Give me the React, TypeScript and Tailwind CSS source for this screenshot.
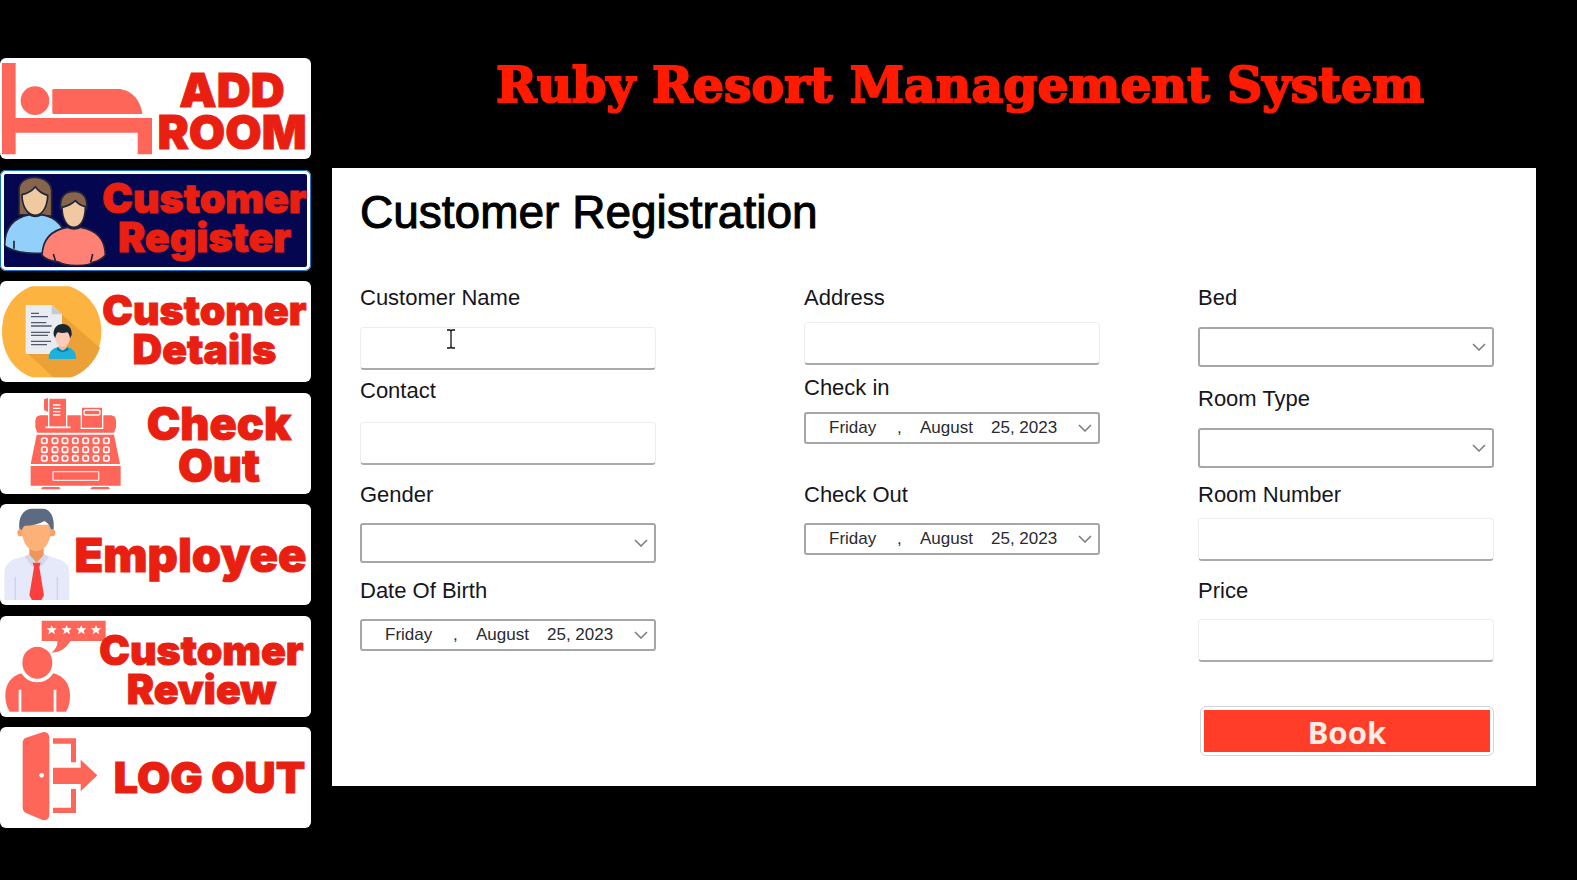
import type { ReactNode } from "react";

const CORAL = "#ff665a";

function BedIcon() {
  return (
    <svg aria-hidden="true" viewBox="0 22 459 303" className="h-[101px] w-[153px] shrink-0 overflow-visible" fill={CORAL}>
      <path d="M6 37h41v165h409v109h-43v-65H47v65H6z" />
      <circle cx="105" cy="150" r="43" />
      <path d="M161 115h200c38 6 62 38 66 75H161q-4 0-4-4v-67q0-4 4-4z" />
    </svg>
  );
}

function CoupleIcon() {
  return (
    <svg aria-hidden="true" viewBox="0 354 294 303" className="h-[101px] w-[98px] shrink-0 overflow-visible" stroke="#20253a" strokeWidth="5" strokeLinejoin="round">
      <path d="M57 488V412c0-22 20-36 47-36s50 16 51 40v76z" fill="#86654c" />
      <path d="M88 462h36v26q-18 10-36 0z" fill="#e6b98f" stroke="none" />
      <path d="M66 428q26-6 40-24 12 18 37 26c0 34-16 60-38 60s-39-26-39-62z" fill="#f0c9a0" />
      <path d="M14 580c0-50 24-82 74-92q18 10 36 0c50 8 74 42 76 92-20 18-60 24-96 24s-62-6-84-18z" fill="#93cffb" />
      <path d="M42 566v24" fill="none" />
      <path d="M182 470c-4-34 12-52 40-52s42 20 38 54z" fill="#86654c" />
      <path d="M186 466q26-6 40-20 12 14 30 18c0 36-12 62-34 62s-36-26-36-60z" fill="#f0c9a0" />
      <path d="M126 610c2-50 28-76 76-84q20 10 40 0c48 8 74 38 74 84-14 14-24 18-36 20-14 14-84 14-104 0-22-2-38-6-50-20z" fill="#ff8074" />
      <path d="M160 606l8 26M278 606l-6 26" fill="none" />
    </svg>
  );
}

function DetailsIcon() {
  return (
    <svg aria-hidden="true" viewBox="0 14 294 303" className="h-[101px] w-[98px] shrink-0 overflow-visible">
      <path d="M95 30H208C262 48 304 98 304 166C304 232 264 288 212 303H98C44 286 6 232 6 166C6 98 42 50 95 30z" fill="#fdb340" />
      <path d="M184 114L300 214C286 256 252 290 212 303H160L84 232z" fill="#eba136" />
      <path d="M77 86h78l31 28v119H77z" fill="#e9edf2" />
      <path d="M155 86l31 28h-31z" fill="#c3cbd6" />
      <path d="M93 111h24M93 121h51M93 139h46M93 149h62M93 168h57M93 177h51M93 195h60M93 205h48" stroke="#555b6c" strokeWidth="4" />
      <path d="M146 248q-1-30 28-36h28q27 6 26 36z" fill="#1fb1dc" />
      <path d="M176 200h24v14q-12 16-24 0z" fill="#eeb9a4" />
      <path d="M172 212l16 12 16-12 2 10-18 6-18-6z" fill="#0b7ea6" />
      <ellipse cx="188" cy="184" rx="22" ry="28" fill="#fbcdb8" />
      <path d="M161 176c-2-20 10-33 27-33s29 13 27 33l-5 10q-2-14-8-18-16 4-28 0-6 4-8 18z" fill="#1c2630" />
    </svg>
  );
}

function RegisterIcon() {
  const columns = [133, 165, 195, 226, 257, 288, 319];
  const rows = [488, 515, 541];
  return (
    <svg aria-hidden="true" viewBox="0 345 381 303" className="h-[101px] w-[127px] shrink-0 overflow-visible" fill={CORAL}>
      <path d="M132 364l12-4v42l-12-6z" />
      <path d="M120 412h214q14 2 14 18v18l-6 16H112l-6-16v-18q0-16 14-18z" />
      <path d="M146 360h54v88h-54z" stroke="#fff" strokeWidth="4" />
      <path d="M136 448h76" stroke="#fff" strokeWidth="5" />
      <path d="M159 381h22M159 391h22M159 401h22M159 411h22" stroke="#fff" strokeWidth="4" />
      <path d="M244 387h64v64h-64z" stroke="#fff" strokeWidth="4" />
      <rect x="252" y="396" width="48" height="15" rx="6" stroke="#fff" strokeWidth="4" />
      <path d="M110 470h232l18 88H92z" />
      {rows.map((y) => columns.map((x) => <rect key={`${x}-${y}`} x={x - 8} y={y - 8} width="16" height="16" rx="5" stroke="#fff" strokeWidth="5" />))}
      <path d="M92 564h270v59H92z" />
      <rect x="159" y="581" width="137" height="26" rx="2" stroke="#ffe3df" strokeWidth="4" />
      <path d="M128 627h50l4 7h-60zM276 627h50l4 7h-60z" />
    </svg>
  );
}

function EmployeeIcon() {
  return (
    <svg aria-hidden="true" viewBox="0 22 210 303" className="h-[101px] w-[70px] shrink-0 overflow-visible">
      <path d="M13 310v-84c2-22 14-34 34-40l38-12h50l36 12c24 6 36 18 37 40v84z" fill="#e6e9fa" />
      <path d="M46 240v70M172 240v70" stroke="#cdd3ee" strokeWidth="4" />
      <path d="M88 150h43v34l-21 20-22-20z" fill="#f0965a" />
      <circle cx="63" cy="108" r="11" fill="#f6a268" />
      <circle cx="155" cy="108" r="11" fill="#f6a268" />
      <path d="M67 84h84v28c-2 30-20 50-42 52-22-2-40-22-42-52z" fill="#fdb178" />
      <path d="M58 96c-4-34 12-59 36-60h36c22 2 34 26 31 62h-9q-3-16-18-25-26 14-60 14-6 4-8 13z" fill="#5d6b82" />
      <path d="M74 182l12-10 24 26 24-26 12 10-22 28-14-12-14 12z" fill="#d3d8ee" />
      <path d="M98 198h24l-4 14 14 84-8 14H96l-8-14 14-84z" fill="#fa3f3c" />
    </svg>
  );
}

function ReviewIcon() {
  return (
    <svg aria-hidden="true" viewBox="0 14 276 303" className="h-[101px] w-[92px] shrink-0 overflow-visible" fill={CORAL}>
      <path d="M125 28h192v61H212c-14 22-32 34-57 35 10-8 18-20 17-35h-47z" />
      {[155, 200, 244, 288].map((x) => (
        <path key={x} transform={`translate(${x} 56)`} fill="#fff" d="M0-15l4 10 11 0-8 7 3 11-10-7-10 7 3-11-8-7 11 0z" />
      ))}
      <ellipse cx="112" cy="154" rx="45" ry="48" />
      <path d="M64 186c12 18 28 27 48 27s36-9 48-27c32 8 50 32 50 66 0 22-4 38-12 49h-29v-66h-8v66H64v-66h-8v66H29c-8-14-13-28-13-49 0-34 18-58 48-66z" />
    </svg>
  );
}

function LogoutIcon() {
  return (
    <svg aria-hidden="true" viewBox="0 350 324 303" className="h-[101px] w-[108px] shrink-0 overflow-visible" fill={CORAL}>
      <path d="M78 382l52-17q18 0 18 17v228q0 20-18 20l-52-22q-10-6-10-16V398q0-12 10-16z" />
      <circle cx="125" cy="495" r="7" fill="#fff" />
      <path d="M159 384h69v72h-15v-56h-54zM159 608h69v-72h-15v56h-54z" />
      <path d="M159 472h83v-24l50 47-50 48v-22h-83z" />
    </svg>
  );
}

type NavItem = { lines: string[]; icon: ReactNode; text: string; active?: boolean };

const NAV: NavItem[] = [
  { lines: ["ADD", "ROOM"], icon: <BedIcon />, text: "text-[47px] leading-[42px] pt-1" },
  { lines: ["Customer", "Register"], icon: <CoupleIcon />, text: "text-[41px] leading-[39px] pb-1", active: true },
  { lines: ["Customer", "Details"], icon: <DetailsIcon />, text: "text-[41px] leading-[39px] pb-1" },
  { lines: ["Check", "Out"], icon: <RegisterIcon />, text: "text-[45px] leading-[42px] pt-1" },
  { lines: ["Employee"], icon: <EmployeeIcon />, text: "text-[47px] leading-[42px]" },
  { lines: ["Customer", "Review"], icon: <ReviewIcon />, text: "text-[41px] leading-[39px] pt-2" },
  { lines: ["LOG OUT"], icon: <LogoutIcon />, text: "text-[43px] leading-[39px]" },
];

function NavButton({ lines, icon, text, active }: NavItem) {
  const surface = active
    ? "bg-[#04064f] shadow-[inset_0_0_0_1px_#1673c9,inset_0_0_0_4px_#ffffff]"
    : "bg-white";
  return (
    <button type="button" className={`flex h-[101px] w-full items-center overflow-hidden rounded-md ${surface}`}>
      {icon}
      <span className={`flex min-w-0 flex-1 flex-col items-center whitespace-nowrap font-['Inter',sans-serif] font-black text-[#e91f12] [-webkit-text-stroke:1px_#e91f12] ${text}`}>
        {lines.map((line) => (
          <span key={line}>{line}</span>
        ))}
      </span>
    </button>
  );
}

function Chevron() {
  return (
    <svg aria-hidden="true" viewBox="0 0 14 8" className="pointer-events-none h-2 w-3.5" fill="none" stroke="#7a7a7a" strokeWidth="1.5">
      <path d="M1 1l6 6 6-6" />
    </svg>
  );
}

type FieldProps = { id: string; label: string; className?: string; gap: string; children: ReactNode };

function Field({ id, label, className = "", gap, children }: FieldProps) {
  return (
    <div className={`flex flex-col ${className} ${gap}`}>
      <label htmlFor={id} id={`${id}-label`} className="text-[22px] leading-6 text-[#16161c]">
        {label}
      </label>
      {children}
    </div>
  );
}

function TextBox({ id }: { id: string }) {
  return (
    <input
      id={id}
      type="text"
      className="h-[43px] w-full rounded-sm border border-b-2 border-[#ededed] border-b-[#ababab] bg-white px-2 text-xl outline-none"
    />
  );
}

function DropDown({ id, options }: { id: string; options: string[] }) {
  return (
    <div className="relative">
      <select id={id} defaultValue="" className="block h-10 w-full appearance-none rounded-[3px] border-2 border-[#a6a6a6] bg-white px-2 text-xl outline-none">
        <option value="" />
        {options.map((option) => (
          <option key={option}>{option}</option>
        ))}
      </select>
      <span className="pointer-events-none absolute inset-y-0 right-2 flex items-center">
        <Chevron />
      </span>
    </div>
  );
}

function DatePicker({ id }: { id: string }) {
  return (
    <button
      id={id}
      type="button"
      aria-labelledby={`${id}-label ${id}`}
      className="flex h-8 w-full items-center rounded-[3px] border-2 border-[#a6a6a6] bg-white pl-[23px] pr-1.5 text-left text-[17px] leading-6 text-[#2a2a30]"
    >
      <span className="w-[68px]">Friday</span>
      <span className="w-[23px]">,</span>
      <span className="w-[71px]">August</span>
      <span className="flex-1">25, 2023</span>
      <Chevron />
    </button>
  );
}

function TextCursor() {
  return (
    <svg aria-hidden="true" viewBox="0 0 10 20" className="pointer-events-none absolute left-[86px] top-0.5 h-5 w-2.5" fill="none" stroke="#111" strokeWidth="1.3">
      <path d="M1 1h3l1 1 1-1h3M5 2v16M1 19h3l1-1 1 1h3" />
    </svg>
  );
}

export default function App() {
  return (
    <div className="flex min-h-screen items-start bg-black pt-[58px] font-['Liberation_Sans',Arial,sans-serif]">
      <div className="flex w-full items-stretch">
        <nav aria-label="Main" className="flex w-[311px] shrink-0 flex-col justify-between">
          {NAV.map((item) => (
            <NavButton key={item.lines.join(" ")} {...item} />
          ))}
        </nav>

        <main className="ml-[21px] mr-[41px] flex-1 pb-[42px]">
          <h1 className="h-[110px] whitespace-nowrap pl-[52px] text-center font-['DejaVu_Serif',serif] text-[49px] font-bold leading-[54px] text-[#ff1a00] [-webkit-text-stroke:2px_#ff1a00]">
            Ruby Resort Management System
          </h1>

          <form className="bg-white pb-[30px] pl-7 pr-[42px] pt-[18px]" onSubmit={(event) => event.preventDefault()}>
            <h2 className="text-[46px] leading-[52px] text-black [-webkit-text-stroke:1px_black]">Customer Registration</h2>

            <div className="mt-12 flex">
              <div className="mr-[148px] flex-1">
                <Field id="name" label="Customer Name" gap="gap-[17px]">
                  <div className="relative">
                    <TextBox id="name" />
                    <TextCursor />
                  </div>
                </Field>
                <Field id="contact" label="Contact" gap="gap-[19px]" className="mt-[9px]">
                  <TextBox id="contact" />
                </Field>
                <Field id="gender" label="Gender" gap="gap-4" className="mt-[18px]">
                  <DropDown id="gender" options={["Male", "Female"]} />
                </Field>
                <Field id="birth" label="Date Of Birth" gap="gap-4" className="mt-4">
                  <DatePicker id="birth" />
                </Field>
              </div>

              <div className="mr-[98px] flex-1">
                <Field id="address" label="Address" gap="gap-3">
                  <TextBox id="address" />
                </Field>
                <Field id="checkin" label="Check in" gap="gap-3" className="mt-[11px]">
                  <DatePicker id="checkin" />
                </Field>
                <Field id="checkout" label="Check Out" gap="gap-4" className="mt-[39px]">
                  <DatePicker id="checkout" />
                </Field>
              </div>

              <div className="flex-1">
                <Field id="bed" label="Bed" gap="gap-[17px]">
                  <DropDown id="bed" options={["Single", "Double", "Triple"]} />
                </Field>
                <Field id="roomtype" label="Room Type" gap="gap-[17px]" className="mt-5">
                  <DropDown id="roomtype" options={["AC", "Non-AC"]} />
                </Field>
                <Field id="roomnumber" label="Room Number" gap="gap-[11px]" className="mt-[15px]">
                  <TextBox id="roomnumber" />
                </Field>
                <Field id="price" label="Price" gap="gap-4" className="mt-[18px]">
                  <TextBox id="price" />
                </Field>
                <div className="mt-11 pl-0.5">
                  <button
                    type="submit"
                    className="h-[50px] w-full rounded-md border border-[#d2d6d8] bg-white px-[3px] font-['Noto_Sans',sans-serif] text-[31px] font-bold leading-[44px] text-[#fdebe6]"
                  >
                    <span className="block h-[42px] bg-[#ff3d28]">Book</span>
                  </button>
                </div>
              </div>
            </div>
          </form>
        </main>
      </div>
    </div>
  );
}
